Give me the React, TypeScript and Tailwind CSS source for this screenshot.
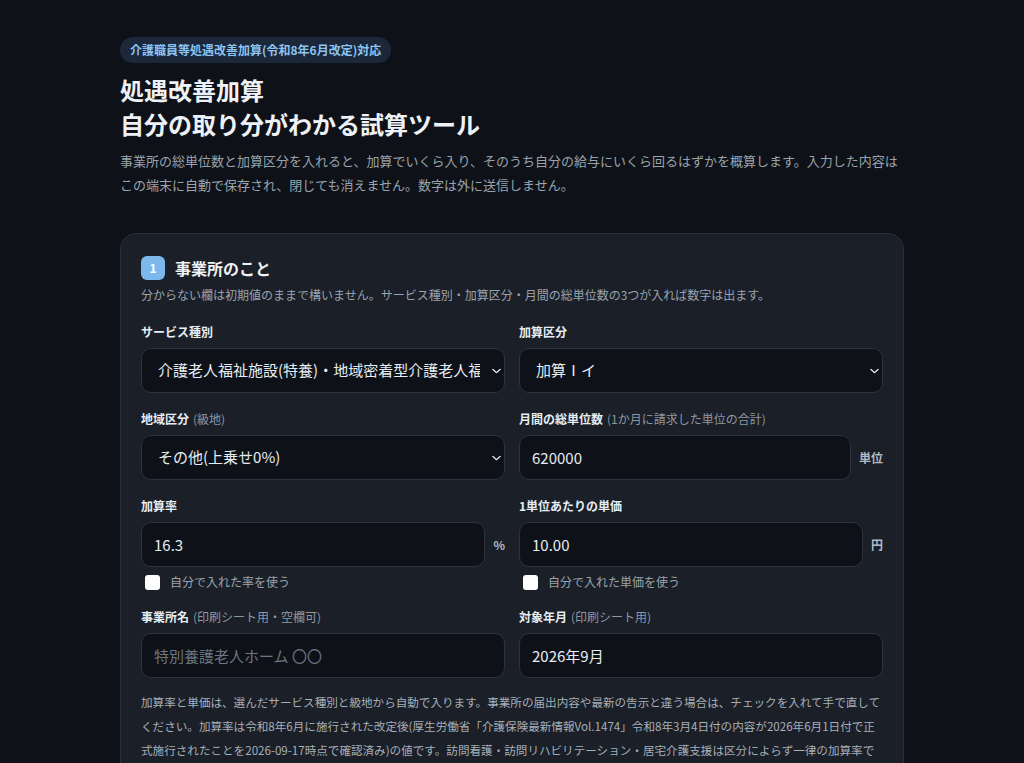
import { useState } from 'react';

const FONT = '"Noto Sans CJK JP", "Noto Sans", sans-serif';

function Chevron() {
  return (
    <svg
      className="pointer-events-none absolute right-[4px] top-1/2 -translate-y-1/2"
      width="9"
      height="5"
      viewBox="0 0 9 5"
      fill="none"
    >
      <path d="M0.8 0.8l3.7 3.4 3.7-3.4" stroke="#e6edf3" strokeWidth="1.2" strokeLinecap="round" strokeLinejoin="round" />
    </svg>
  );
}

function Label({ title, note }: { title: string; note?: string }) {
  return (
    <div className="mb-1.5 text-xs font-bold leading-5 text-[#e6edf3]">
      {title}
      {note && <span className="ml-1 font-normal text-[#8f98a3]">{note}</span>}
    </div>
  );
}

function Select({ value, options }: { value: string; options: string[] }) {
  const [v, setV] = useState(value);
  return (
    <div className="relative">
      <select
        value={v}
        onChange={(e) => setV(e.target.value)}
        className="h-[45px] w-full appearance-none rounded-[10px] border border-[#2d333e] bg-[#0e1218] pl-4 pr-6 text-[15px] text-[#e6edf3] outline-none"
      >
        {options.map((o) => (
          <option key={o}>{o}</option>
        ))}
      </select>
      <Chevron />
    </div>
  );
}

function Input({ value, placeholder }: { value?: string; placeholder?: string }) {
  const [v, setV] = useState(value ?? '');
  return (
    <input
      value={v}
      placeholder={placeholder}
      onChange={(e) => setV(e.target.value)}
      className="h-[45px] w-full min-w-0 rounded-[10px] border border-[#2d333e] bg-[#0e1218] px-3 text-[15px] text-[#e6edf3] outline-none placeholder:text-[#6c7581]"
    />
  );
}

function Unit({ children }: { children: string }) {
  return <span className="shrink-0 text-xs font-semibold text-[#b4bcc5]">{children}</span>;
}

function Check({ label }: { label: string }) {
  return (
    <label className="mt-1.5 flex items-center gap-2.5 text-xs leading-[18px] text-[#9aa3ad]">
      <input type="checkbox" className="ml-1 h-[15px] w-[15px] appearance-none rounded-[3px] bg-white" />
      {label}
    </label>
  );
}

export default function App() {
  return (
    <div className="min-h-screen bg-[#0e1218] pb-16" style={{ fontFamily: FONT }}>
      <div className="mx-auto w-[784px] pt-9">
        {/* Header */}
        <span className="inline-flex rounded-full bg-[#1c2839] px-2.5 py-1 text-xs font-bold leading-[18px] text-[#8cc4f2]">
          介護職員等処遇改善加算(令和8年6月改定)対応
        </span>
        <h1 className="mt-2.5 text-2xl font-bold leading-[34px] text-[#eef2f6]">
          処遇改善加算
          <br />
          自分の取り分がわかる試算ツール
        </h1>
        <p className="mt-2 text-[13px] leading-6 text-[#9aa3ad]">
          事業所の総単位数と加算区分を入れると、加算でいくら入り、そのうち自分の給与にいくら回るはずかを概算します。入力した内容はこの端末に自動で保存され、閉じても消えません。数字は外に送信しません。
        </p>

        {/* Step 1 */}
        <section className="mt-9 rounded-2xl border border-[#2a303a] bg-[#1a1f28] p-5">
          <div className="flex h-7 items-center gap-2.5">
            <span className="flex h-6 w-6 items-center justify-center rounded-md bg-[#7cb8ec] text-xs font-bold text-white">
              1
            </span>
            <h2 className="text-base font-bold text-[#eef2f6]">事業所のこと</h2>
          </div>
          <p className="mt-1 text-xs leading-[18px] text-[#9aa3ad]">
            分からない欄は初期値のままで構いません。サービス種別・加算区分・月間の総単位数の3つが入れば数字は出ます。
          </p>

          <div className="mt-4.5 grid grid-cols-2 gap-x-3.5 gap-y-4">
            <div>
              <Label title="サービス種別" />
              <Select
                value="介護老人福祉施設(特養)・地域密着型介護老人福祉施設"
                options={[
                  '介護老人福祉施設(特養)・地域密着型介護老人福祉施設',
                  '介護老人保健施設',
                  '訪問介護',
                  '通所介護',
                ]}
              />
            </div>
            <div>
              <Label title="加算区分" />
              <Select value="加算Ⅰイ" options={['加算Ⅰイ', '加算Ⅰロ', '加算Ⅱ', '加算Ⅲ', '加算Ⅳ']} />
            </div>

            <div>
              <Label title="地域区分" note="(級地)" />
              <Select value="その他(上乗せ0%)" options={['1級地', '2級地', '3級地', 'その他(上乗せ0%)']} />
            </div>
            <div>
              <Label title="月間の総単位数" note="(1か月に請求した単位の合計)" />
              <div className="flex items-center gap-2">
                <Input value="620000" />
                <Unit>単位</Unit>
              </div>
            </div>

            <div>
              <Label title="加算率" />
              <div className="flex items-center gap-2">
                <Input value="16.3" />
                <Unit>%</Unit>
              </div>
              <Check label="自分で入れた率を使う" />
            </div>
            <div>
              <Label title="1単位あたりの単価" />
              <div className="flex items-center gap-2">
                <Input value="10.00" />
                <Unit>円</Unit>
              </div>
              <Check label="自分で入れた単価を使う" />
            </div>

            <div>
              <Label title="事業所名" note="(印刷シート用・空欄可)" />
              <Input placeholder="特別養護老人ホーム 〇〇" />
            </div>
            <div>
              <Label title="対象年月" note="(印刷シート用)" />
              <Input value="2026年9月" />
            </div>
          </div>

          <p className="mt-3 text-[11.58px] leading-6 text-[#a7afb8]">
            加算率と単価は、選んだサービス種別と級地から自動で入ります。事業所の届出内容や最新の告示と違う場合は、チェックを入れて手で直してください。加算率は令和8年6月に施行された改定後(厚生労働省「介護保険最新情報Vol.1474」令和8年3月4日付の内容が2026年6月1日付で正式施行されたことを2026-09-17時点で確認済み)の値です。訪問看護・訪問リハビリテーション・居宅介護支援は区分によらず一律の加算率です。
          </p>
        </section>
      </div>
    </div>
  );
}
